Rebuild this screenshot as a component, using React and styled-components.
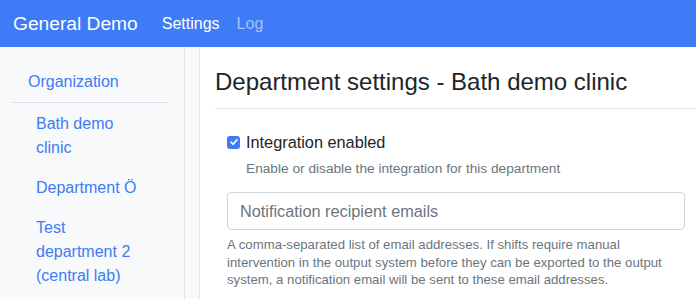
import React from "react";
import styled, { createGlobalStyle } from "styled-components";

const Global = createGlobalStyle`
  html, body { margin: 0; padding: 0; background: #fff; }
  body { font-family: "Liberation Sans", Arial, sans-serif; color: #212529; }
  * { box-sizing: border-box; }
`;

const Navbar = styled.nav`
  height: 47px;
  background: #3d7bf7;
  display: flex;
  align-items: center;
  padding-left: 13px;
`;

const Brand = styled.a`
  color: #fff;
  font-size: 19.2px;
  margin-right: 24px;
  text-decoration: none;
`;

const NavLink = styled.a`
  color: ${(p) => (p.$active ? "#fff" : "rgba(255,255,255,0.55)")};
  font-size: 16px;
  margin-right: 17px;
  text-decoration: none;
`;

const Body = styled.div`
  display: flex;
  height: 252px;
`;

const Sidebar = styled.aside`
  flex: 0 0 185px;
  background: #f8f9fa;
  border-right: 1px solid #e3e3e3;
  padding: 23px 15px 0 12px;
`;

const Gutter = styled.div`
  flex: 0 0 15px;
  background: #fafafa;
  border-right: 1px solid #e6e6e6;
`;

const OrgLink = styled.a`
  display: block;
  color: #3d7bf7;
  font-size: 16px;
  line-height: 24px;
  padding: 0 0 8px 16px;
  border-bottom: 1px solid #dee2e6;
  text-decoration: none;
`;

const DeptList = styled.ul`
  list-style: none;
  margin: 0;
  padding: 5px 0 0 24px;
`;

const DeptItem = styled.li`
  width: 110px;
  color: #3d7bf7;
  font-size: 16px;
  line-height: 24px;
  padding: 4px 0;
  margin-bottom: 8px;
`;

const Main = styled.main`
  flex: 1;
  min-width: 0;
  padding: 20px 0 0 15px;
`;

const Title = styled.h1`
  margin: 0;
  font-size: 24px;
  font-weight: 500;
  line-height: 29px;
  padding-bottom: 12px;
  border-bottom: 1px solid #dee2e6;
`;

const Form = styled.div`
  padding: 21px 11px 0 12px;
`;

const CheckRow = styled.label`
  display: flex;
  align-items: center;
  gap: 6px;
  font-size: 16.3px;
  line-height: 24px;
`;

const Box = styled.span`
  width: 13px;
  height: 13px;
  border-radius: 3px;
  background: #3d7bf7;
  display: inline-flex;
  align-items: center;
  justify-content: center;
`;

const CheckHelp = styled.div`
  font-size: 13.7px;
  color: #6c757d;
  line-height: 18px;
  margin: 6px 0 0 19px;
`;

const Input = styled.div`
  margin-top: 14px;
  height: 38px;
  border: 1px solid #ced4da;
  border-radius: 4px;
  padding: 0 12px;
  display: flex;
  align-items: center;
  font-size: 16.3px;
  color: #6c757d;
`;

const Help = styled.div`
  margin-top: 6px;
  font-size: 13.2px;
  line-height: 17.5px;
  color: #6c757d;
`;

export default function App() {
  return (
    <>
      <Global />
      <Navbar>
        <Brand>General Demo</Brand>
        <NavLink $active>Settings</NavLink>
        <NavLink>Log</NavLink>
      </Navbar>
      <Body>
        <Sidebar>
          <OrgLink>Organization</OrgLink>
          <DeptList>
            <DeptItem>Bath demo clinic</DeptItem>
            <DeptItem>Department Ö</DeptItem>
            <DeptItem>Test department 2 (central lab)</DeptItem>
          </DeptList>
        </Sidebar>
        <Gutter />
        <Main>
          <Title>Department settings - Bath demo clinic</Title>
          <Form>
            <CheckRow>
              <Box>
                <svg width="10" height="10" viewBox="0 0 10 10">
                  <path d="M2 5.2 L4.2 7.3 L8 2.8" fill="none" stroke="#fff" strokeWidth="1.6" strokeLinecap="round" strokeLinejoin="round" />
                </svg>
              </Box>
              Integration enabled
            </CheckRow>
            <CheckHelp>Enable or disable the integration for this department</CheckHelp>
            <Input>Notification recipient emails</Input>
            <Help>
              A comma-separated list of email addresses. If shifts require manual intervention in the output system before they can be exported to the output system, a notification email will be sent to these email addresses.
            </Help>
          </Form>
        </Main>
      </Body>
    </>
  );
}
